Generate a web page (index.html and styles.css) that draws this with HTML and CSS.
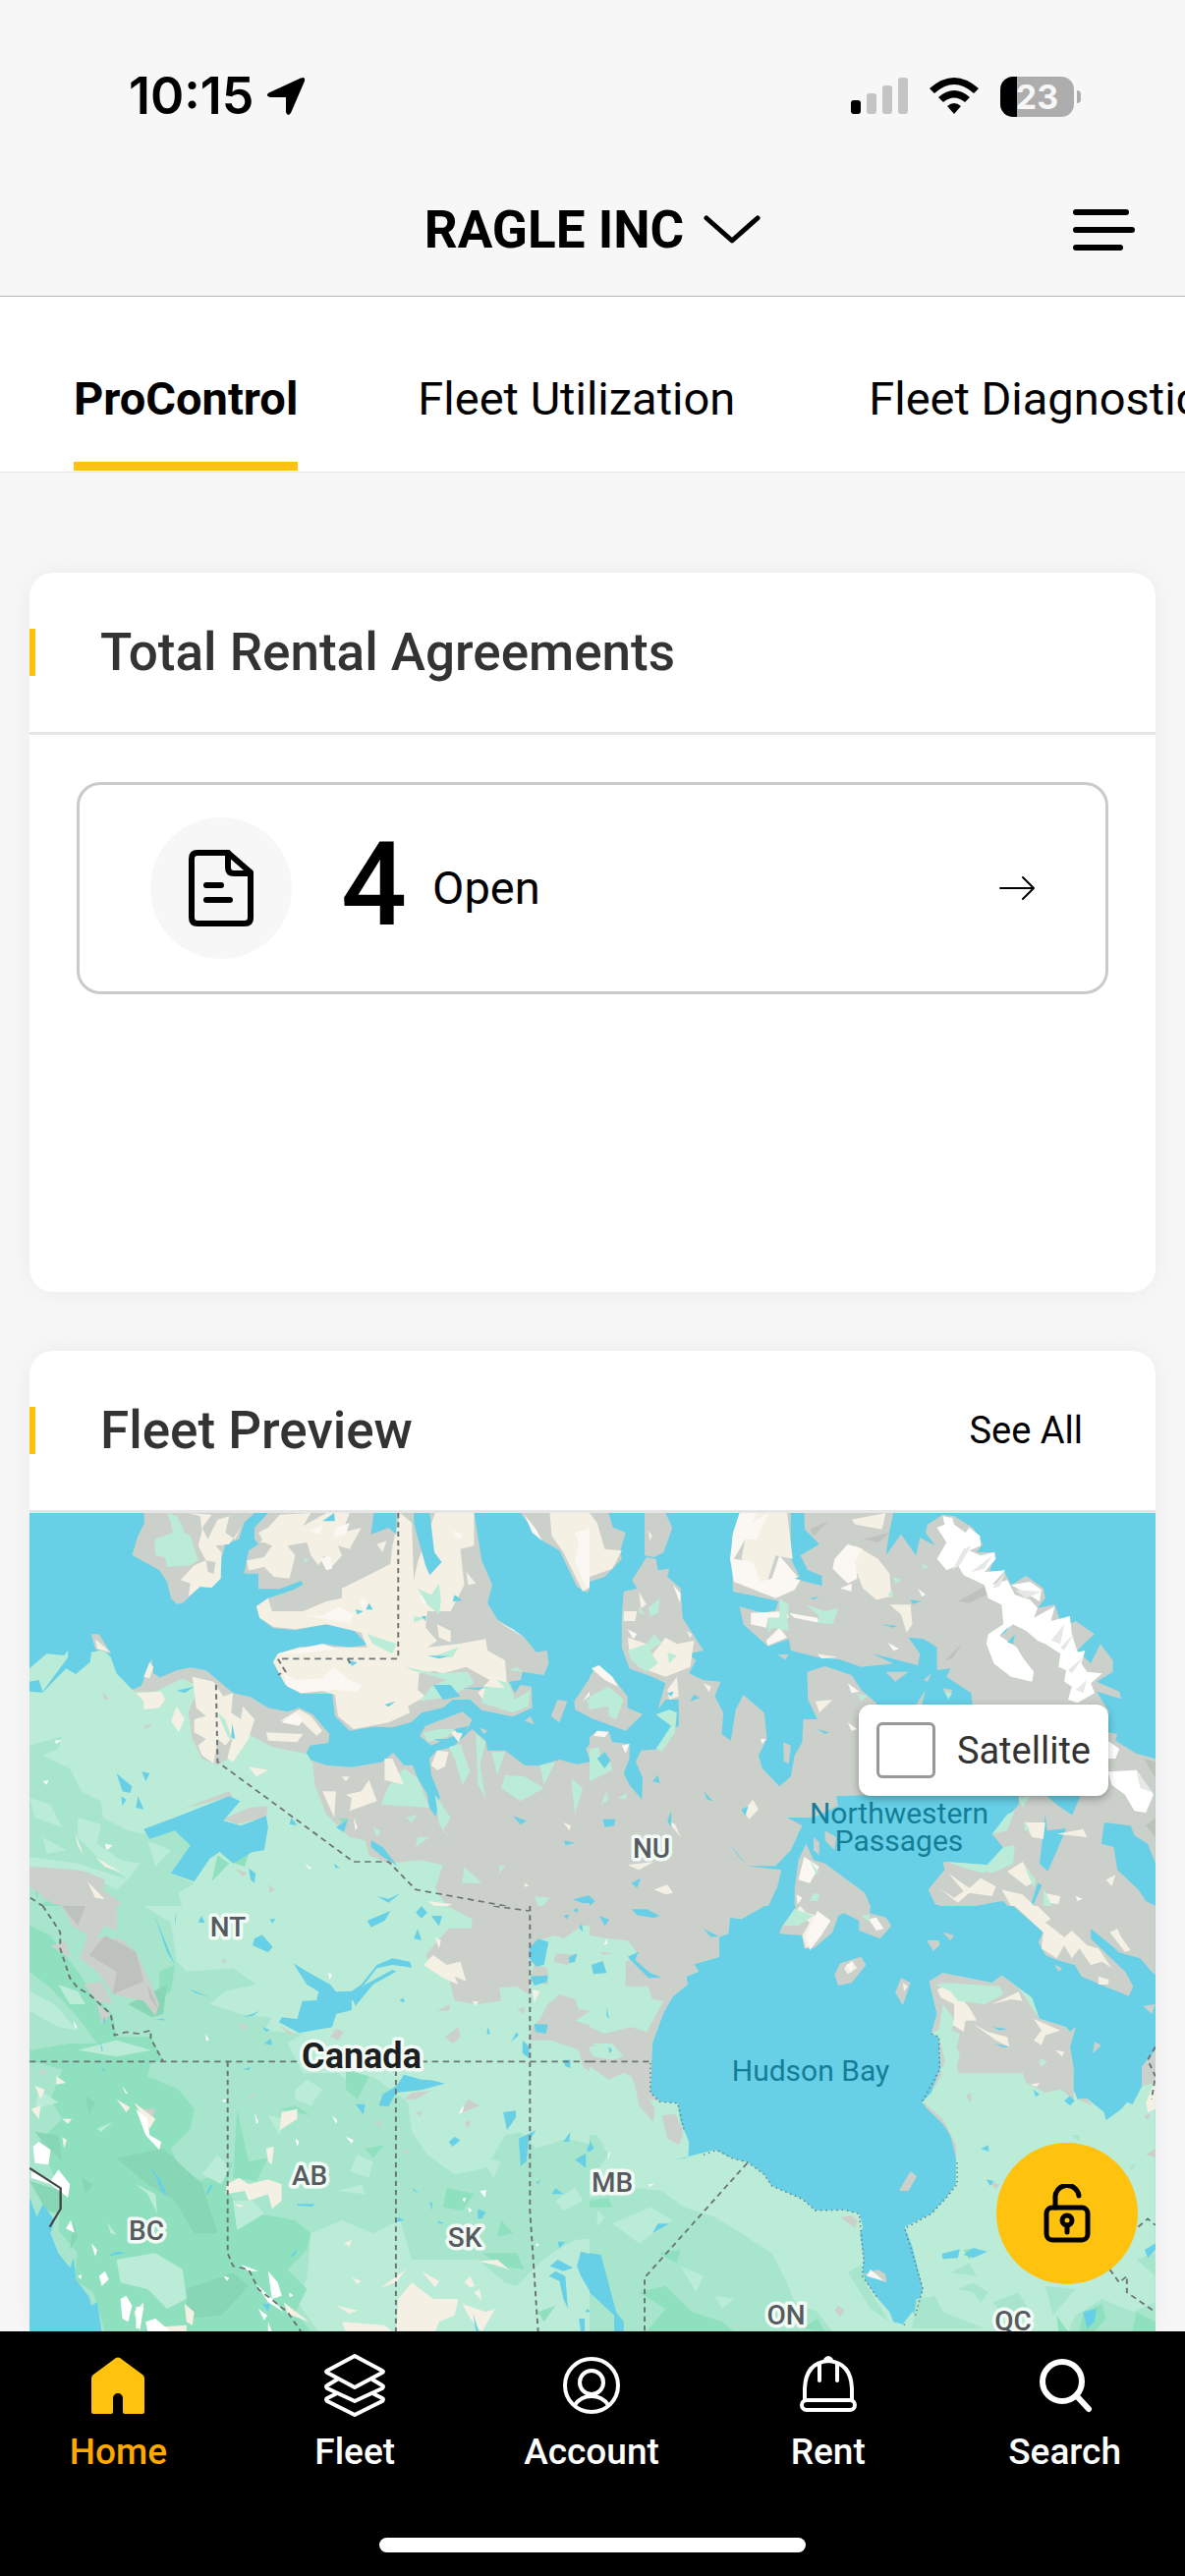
FILE: index.html
```html
<!DOCTYPE html>
<html lang="en">
<head>
<meta charset="utf-8">
<meta name="viewport" content="width=device-width, initial-scale=1">
<title>ProControl</title>
<link rel="stylesheet" href="styles.css">
</head>
<body>
<header class="top">
  <div class="status">
    <div class="status-left">
      <span class="clock">10:15</span>
      <svg width="40" height="40" viewBox="0 0 40 40" aria-hidden="true"><path d="M35 1.500Q40 -.5 39 4.500L25 37Q21.500 41.500 20 36V21H4Q-1.500 19.500 2.500 16.500Z"/></svg>
    </div>
    <div class="status-right">
      <svg width="58" height="38" viewBox="0 0 58 38" aria-hidden="true"><rect y="23" width="10" height="14" rx="3"/><g fill="#c4c4c4"><rect x="16" y="16" width="10" height="21" rx="3"/><rect x="32" y="8" width="10" height="29" rx="3"/><rect x="48" width="10" height="37" rx="3"/></g></svg>
      <svg width="50" height="38" viewBox="0 0 50 38" aria-hidden="true"><path d="M0 11Q25-11 50 11L45 16Q25-2 5 16Z"/><path d="M9 20Q25 6 41 20L36 25Q25 16 14 25Z"/><path d="M18 29Q25 23 32 29L25 37Z"/></svg>
      <div class="battery"><span class="battery-cell">23</span><span class="battery-tip"></span></div>
    </div>
  </div>
  <div class="titlebar">
    <button class="company" type="button">RAGLE INC
      <svg width="58" height="30" viewBox="0 0 58 30" aria-hidden="true"><path class="line5" d="M3 3L29 26L55 3"/></svg>
    </button>
    <button class="menu" type="button" aria-label="Menu">
      <svg width="63" height="42" viewBox="0 0 63 42" aria-hidden="true"><path class="line6" d="M3 3H54M3 21H60M3 39H48"/></svg>
    </button>
  </div>
</header>

<nav class="tabs" aria-label="Sections">
  <a class="tab tab-active" href="#procontrol">ProControl</a>
  <a class="tab" href="#utilization">Fleet Utilization</a>
  <a class="tab" href="#diagnostics">Fleet Diagnostics</a>
</nav>

<main class="content">
  <section class="card agreements">
    <div class="card-head"><h2>Total Rental Agreements</h2></div>
    <div class="card-body">
      <a class="summary" href="#agreements">
        <span class="disc"><svg width="66" height="78" viewBox="0 0 66 78" aria-hidden="true"><path class="line6" d="M40 3H9Q3 3 3 9V69Q3 75 9 75H57Q63 75 63 69V23Z"/><path class="line6" d="M40 3V18Q40 24 46 24H63M18 36H33M18 51H42"/></svg></span>
        <span class="count">4</span>
        <span class="state">Open</span>
        <svg class="go" width="36" height="24" viewBox="0 0 36 24" aria-hidden="true"><path class="line2" d="M1 12H34M24 1L35 12L24 23"/></svg>
      </a>
    </div>
  </section>

  <section class="card fleet">
    <div class="card-head"><h2>Fleet Preview</h2><a class="see-all" href="#fleet">See All</a></div>
    <div class="map">
      <svg class="map-art" viewBox="30 1540 1146 833" preserveAspectRatio="xMidYMin slice" role="img" aria-label="Map of Canada">
        <rect class="w" x="30" y="1540" width="1146" height="833"/>
        <svg x="0" y="1530" width="620" height="430" viewBox="0 0 1568 1290" preserveAspectRatio="none">
          <path class="g" d="M340 570L455 510L490 502L530 510L600 580L645 592L690 625L740 637L770 625L805 645L848 705L845 732L798 740L783 778L840 800L905 806L985 790L1012 762L1040 800H1062L1075 840L1100 890L1105 930L1122 958L1132 895L1110 830L1105 780L1125 755L1165 745L1215 690L1250 725L1255 755H1300L1350 800L1385 802L1440 783L1485 797L1520 790L1508 750L1535 710L1568 700V1290H76V800Z"/>
          <path class="l" d="M76 575L110 578L170 505L195 522L232 485L235 455L265 448L285 470L300 520L345 575H400L470 535L510 560L485 640L495 720L520 780L560 800L600 770L640 705L700 745L790 765L805 795L810 860L840 950L900 1020L940 1030L950 1075L1000 1100L1080 1090L1140 1105L1120 1175L1150 1230L1215 1290H76ZM76 505L120 460L165 465L175 450V470L110 575L100 540L76 545Z"/>
          <path class="l" d="M1040 810L1075 840L1105 930L980 920L1000 865ZM1155 745L1185 735L1210 820L1190 860L1170 780ZM1225 705L1250 730L1235 800L1250 900L1230 860ZM1265 760L1300 760L1280 830ZM1300 830L1350 835L1400 870L1340 910L1290 870ZM1390 800L1430 790L1400 860ZM1470 840L1500 870L1480 950ZM1120 890L1160 960L1140 1000L1175 1050L1130 980ZM1540 750L1568 760V860L1530 810ZM1045 960L1075 950L1060 975ZM1075 1020L1105 1020L1070 1050ZM1195 1110L1240 1160L1190 1160ZM1375 1200L1415 1205L1390 1240ZM960 990L980 1000L970 1020ZM1285 1105L1300 1110L1285 1130Z"/>
          <path class="m" d="M76 740L160 712L150 750L110 770L180 810L210 880L260 910L265 960L330 1000L370 1010L450 1000L500 1040L470 1090L440 1130L500 1160L460 1190L480 1290H76V1110L200 1120L300 1180L330 1150L200 1100L76 1080Z"/>
          <path class="l" d="M76 900L130 920L160 990L90 960ZM200 960L260 980L250 1040L310 1090L360 1100L330 1150L250 1080L200 1020ZM380 1030L440 1060L400 1110ZM110 1020L170 1060L120 1070Z"/>
          <path class="d" d="M450 1000L520 995L530 1015L500 1035ZM560 1075L590 1100L545 1155ZM600 1060L640 1070L630 1110L605 1100ZM870 962H895L890 990ZM80 1130L110 1160L95 1210ZM150 1200L200 1220L180 1260L120 1290H76V1240Z"/>
          <path class="g" d="M76 1110L150 1115L220 1125L270 1150L265 1180L310 1220L300 1250L250 1290H170L190 1240L130 1220L76 1170ZM370 30L372 60L355 100L340 158L410 205L430 240L440 290L455 308L470 305L515 255L540 258L568 230L570 170L580 125L615 110L628 60L655 30ZM690 30L655 75V110L665 125L640 145L628 215H665V262H720L775 237L780 248L755 265L690 290L660 315L668 350L703 382L760 388L840 370L910 388L945 432L900 440L835 430L770 440L715 460L703 485L735 555L775 582H855L862 650L900 695L960 683L1010 685L1060 668L1085 640L1140 625L1165 600H1210L1240 632L1320 652L1370 625L1368 560L1340 555L1325 580L1310 545L1340 540L1345 515L1400 525L1412 490L1408 450L1380 455L1350 410L1280 355L1255 305L1267 250L1240 175L1220 30ZM1340 30L1390 110L1440 145L1485 255L1510 273L1568 200V30ZM235 400L255 400L285 460L245 445ZM390 475L395 520L410 530L390 575L360 570ZM1080 710L1095 680L1190 637L1215 660L1200 700L1160 715L1110 740ZM1435 600L1460 605L1440 670L1418 650ZM1478 605L1540 495L1568 530V685L1480 630ZM1350 665L1365 650L1375 675ZM1235 685L1255 695L1245 705ZM455 940L590 880L600 895L480 930ZM575 965L640 930L690 925L685 960L610 980ZM370 680L395 672L375 690ZM265 575L280 600L268 600ZM605 1115L635 1130L625 1140ZM690 1165L708 1180L695 1190Z"/>
          <path class="c" d="M485 30L515 40L520 85L510 130L530 175L500 190L465 235L490 245L485 285L515 255L545 258L568 230L570 150L555 130L590 125L620 75L605 110L580 90L590 40L560 50L535 110L520 75L545 35ZM530 175L555 180L550 215L535 210ZM690 75L720 35L800 30L780 70L840 30H900L880 90L930 75L900 140L870 130L880 160L850 200L835 160L820 190L800 160L790 120L740 130L760 160L745 230L705 225L680 195L640 205L635 175L680 165L700 130L680 120L665 90ZM660 315L690 290L700 330L780 330L840 300L880 290L880 260L940 225L1005 185L1010 130L1030 30L1060 60L1065 235L1075 180L1120 30H1220V130L1185 140L1195 250L1160 330L1100 330L1095 380L1125 420L1100 440L1180 430L1250 415L1255 450L1300 480L1305 560L1315 600L1250 610L1230 580L1260 540L1200 500L1140 520L1080 500L1075 570L1095 590L1050 620L1055 640L1000 670L910 690L870 650L862 585L820 570L775 580L735 555L703 485L715 460L770 440L860 440H945L930 395L840 370L760 385L705 378L668 350ZM1415 30L1420 100L1450 150L1500 270L1568 220V30ZM245 415L285 455L250 445ZM385 485L395 500L385 535L370 530ZM350 580L415 575L425 600L410 625L370 630L370 605ZM495 530L550 545L575 590L600 580L595 640L620 660L625 620L655 660L640 720L600 790L585 780L600 710L580 740L560 720L550 795L520 770L510 740L530 720L500 700L500 660L530 650L505 625ZM455 620L475 660L460 700L440 665ZM720 665L770 630L800 650L830 695L815 710L770 660ZM685 700L780 705L765 730L690 725ZM1110 800L1125 755L1155 760L1145 805L1125 815ZM830 880L865 880L860 960ZM950 845L970 910L900 940L905 900L890 890L930 880ZM990 780L1010 780L1040 860L990 845ZM640 805L690 815L660 835ZM880 835L900 835L890 850ZM193 1005L215 1075L200 1045ZM245 1080L315 1130L270 1110ZM225 1155L270 1210L245 1205ZM1450 975L1470 985L1465 1000ZM1350 1160L1362 1168L1350 1172Z"/>
          <path class="c" d="M670 120H715L740 100L745 80L700 60ZM970 125L995 115L985 150ZM1200 210L1225 245L1205 250ZM1125 370L1160 390L1160 425L1130 410ZM1050 470L1200 460L1180 500L1080 520ZM1160 700L1200 680L1180 730ZM1100 1215L1165 1225L1130 1240Z"/>
          <path class="s" d="M780 340L830 345L870 315L910 340L900 365L840 355ZM730 520L760 540L830 535L860 500L900 540L930 555L920 575L860 570L775 580L740 560ZM715 460L830 430L870 445L770 460ZM1480 90L1568 60V210L1510 260L1480 180L1490 120ZM1350 35L1380 80L1395 115L1370 90ZM1535 500L1568 540L1500 605L1520 570ZM825 170L850 160L855 200L840 205ZM795 85L830 65L825 95ZM865 75L900 60L890 95L860 105ZM1165 85L1190 95L1180 110ZM925 290L945 300L935 330ZM1080 280L1105 295L1090 310ZM1280 360L1320 385L1350 410ZM760 640L780 660L770 680L725 670ZM785 1100L802 1115L795 1118ZM110 850L125 845L120 860ZM140 725L160 722L145 735ZM270 1040L290 1045L275 1060ZM910 960L920 990L915 1000Z"/>
          <path class="l" d="M430 30L455 40L465 60L475 90L490 100L510 175L490 190L430 195L425 165L400 160L398 110L445 90L440 60ZM1075 260L1110 280L1130 245L1135 300L1130 340L1100 310ZM1065 345L1095 350L1065 365ZM945 400L1020 430L1010 460L960 430ZM1110 470L1180 440L1165 470ZM1045 500L1120 520L1205 515L1220 550L1160 590L1080 605L1110 560L1150 540L1060 510ZM1250 560L1300 565L1280 540L1310 550L1325 600L1365 570L1360 620L1320 640L1240 610ZM1090 700L1130 690L1170 690L1150 715L1100 730ZM1510 600L1568 590V680L1520 640ZM785 165L795 175L780 180ZM1330 500L1345 515L1310 510ZM560 640L580 660L600 730L585 710Z"/>
          <path class="w" d="M955 95L962 30H1020V95L1000 75ZM1065 30H1106L1118 150L1137 180L1106 220L1095 190L1065 60ZM830 55L860 30L862 55ZM1165 300L1170 280L1190 297ZM1085 345L1097 345L1095 360ZM950 305L960 325L942 325ZM915 325L935 330L920 340ZM1100 465L1155 467L1130 475ZM1190 565L1255 562L1230 570ZM990 615L1018 605L1000 622ZM455 572L500 560L475 580ZM598 672L605 720L595 715ZM1115 555L1160 555L1185 590L1140 600ZM900 480L920 487L905 498ZM1170 690L1205 680L1198 705L1175 700ZM1115 720H1160L1150 735ZM370 995L450 960L590 895L618 910L575 970L620 985L685 955L690 990L680 1060L650 1065L600 1100L565 1065L540 1085L500 1155L440 1130L490 1045L450 1000L385 1025ZM300 825L340 865L335 885L315 880ZM312 895L325 905L315 925ZM355 895L370 935L350 930ZM365 820L385 825L375 850ZM750 960L765 985L745 980ZM640 1115L658 1130L655 1160L645 1150ZM865 990L895 965L885 1005ZM955 1030L985 1050L1022 1107L985 1080L955 1050ZM1320 955L1355 970L1340 982ZM1452 1030L1480 1037L1455 1045ZM970 1200L1000 1208L1030 1192L1000 1220ZM950 1265L1005 1245L985 1290H945ZM1065 1260L1080 1230L1100 1260L1085 1270ZM1110 1260L1138 1262L1130 1290ZM1475 1210L1515 1198L1530 1220L1500 1222ZM1478 1240L1488 1245L1475 1255ZM860 1100L875 1115L862 1112ZM505 1290L518 1260L528 1290ZM445 1290L455 1255V1290ZM695 1270H710L700 1283ZM1545 1260L1568 1290H1550Z"/>
          <path class="b" d="M1025 30V475H715L735 515L715 524M895 475L905 500M556 555L560 790L910 1095H1000L1070 1180L1362 1243V1290M78 1205L110 1230L120 1270L150 1290"/>
        </svg>
        <svg x="600" y="1530" width="606" height="430" viewBox="0 0 1568 1290" preserveAspectRatio="none">
          <rect class="w" width="1568" height="1290"/>
          <path class="g" d="M0 30H50L62 75L85 85L95 90L80 150L85 170L40 225L0 240ZM145 30H200L218 75L195 150L170 165L145 160ZM150 165L175 170L180 205L210 200L205 225L240 260L245 350L300 450L260 460L280 480L262 520L300 540L345 545L330 590L352 640L348 705L372 725L385 630L405 585L460 640L467 720L445 770L455 810L500 865L530 835L540 770L560 730L563 660H600L575 600L573 515L620 498L690 525L715 570L755 610V890L650 895L655 925L590 960H520L560 985L550 1010L530 1060L490 1108H415L370 1040L390 1075L415 1108L505 1120L495 1170L465 1245L400 1265L370 1270L365 1290H0V715L20 695H50L60 730L105 735V780L90 825L105 860L138 905L140 840L122 790L135 755L190 750L215 690L235 680V600L200 600L180 630L200 550L165 530L105 505L85 440V350L90 270L125 260L112 235ZM0 530L20 495L60 530L100 590V625L140 645L95 695L0 655Z"/>
          <path class="g" d="M565 30L567 80L605 125L555 160L575 205L612 222V252L540 230L500 290L490 328L455 335L395 315L405 370L470 437L525 415L530 450L600 470L660 478L715 500L800 490L745 460L865 495L870 460L840 410L880 415L915 440V510L950 505L940 530L1005 580L1010 640H1370L1335 575L1400 598L1395 575L1335 545L1378 515V480L1345 430L1320 490L1285 450L1305 425L1330 400L1280 360L1245 380L1225 310L1180 320L1200 290L1195 260L1150 222L1110 250L1090 205L1050 220L1070 150H1020L1035 125L1010 75L960 40L930 35L890 65L885 90L910 130L870 105L860 160L820 95L780 160L790 85L800 30ZM375 170L378 270L440 285L500 300L560 240L530 170V30H395L375 100ZM495 462H525L515 478ZM780 515L840 515L805 545ZM880 540L900 520L890 545ZM860 615L885 570L875 615ZM510 730L530 740L525 795L512 790ZM930 565L955 570L945 600ZM1365 700L1390 705L1385 725L1440 765L1490 780V1100L1470 1040L1435 1015L1425 985L1355 975L1348 1040L1380 1050L1390 1120L1445 1180L1465 1215L1490 1230V1290H1145L1090 1215L1060 1220L960 1243L910 1225L892 1180L935 1120L930 1095L1050 1105L1090 1085L1095 1060L1060 1010L1130 920V895H1205L1230 920L1280 960V990L1205 1000L1200 950L1185 1100L1225 1145L1240 1190L1180 1160L1145 1290ZM570 1040L550 1090L540 1180V1240L505 1290H790L775 1265L735 1255L745 1245L725 1190L620 1100L590 1090ZM620 1000L650 1020L645 1060L620 1030ZM590 1020L605 1035V1075L590 1060Z"/>
          <path class="c" d="M0 30L20 60L40 140L85 145L60 200L0 225ZM440 30H520L535 170L490 160L460 270L430 200L400 170L410 110ZM700 130L760 170L790 215L795 285L755 295L720 260L700 200ZM690 50L780 30L770 80L700 65ZM90 330L125 330L120 360L90 360ZM130 270L150 310L135 320ZM100 410L150 430L160 470L200 410L230 430L275 420L265 500L200 530L130 500L105 450ZM790 310L845 310L850 370L835 395L820 340ZM600 460L655 470L610 475ZM300 550L320 560L315 578ZM205 570L230 530L235 590L210 600ZM595 605L640 600L605 640ZM405 940L430 905L445 935L420 965ZM205 970L225 980L240 1020ZM170 1180L205 1165L220 1190L200 1195ZM1145 975L1200 975L1195 1025L1165 1020ZM1230 1010L1300 995L1310 1020ZM920 1175L960 1205L985 1185L945 1130L1000 1175L1030 1145L1070 1170L1060 1200L1000 1190L970 1220ZM1100 1125L1140 1095L1175 1155L1150 1170ZM1085 1180L1140 1195L1190 1250L1220 1290H1150L1110 1230ZM1360 1150L1385 1135L1375 1170ZM1195 1190L1240 1200L1235 1225L1205 1220ZM100 1105L170 1095L130 1120ZM155 85L165 100L158 115ZM255 390L270 400L265 412Z"/>
          <path class="s" d="M395 30H440L430 60L470 30L440 110L410 110L380 170L430 180L450 240L480 230L500 160L555 235L540 265L490 290L380 240L370 170L378 90ZM645 170L680 125L720 140L700 175L705 230L680 245L640 200ZM425 335L520 330L525 350L470 350L465 380L425 370ZM465 420L500 380L520 410L470 435ZM220 250L240 275L238 305ZM5 505L25 495L60 530L75 560L40 540ZM660 260L690 245V270ZM565 1080L605 1110L580 1160L550 1150ZM585 1250L635 1255L640 1290H580ZM735 1270L775 1275L780 1290H740ZM525 335L600 350L605 365L540 350ZM545 1195L560 1205L548 1225ZM680 550L710 575L690 580ZM1280 1200L1298 1208L1285 1215ZM1437 1240L1452 1255H1440ZM865 260L885 280L875 285ZM100 385L125 400L115 415ZM20 695L50 700L40 715L10 710ZM450 720L465 720L455 735ZM85 740L105 735L95 765ZM680 670L705 690L690 695ZM785 425L815 445L800 450Z"/>
          <path class="i" d="M930 40L955 45L960 65L990 90L1000 75L1028 100L1030 130L1000 145L1030 160L1065 150L1070 170L1040 210L1095 205L1060 250L1100 235L1120 280L1160 295L1180 320L1170 350L1225 315L1215 360L1265 345L1270 400L1285 455L1305 450L1295 490L1310 515L1350 520L1320 550L1330 580L1285 610L1260 600L1270 560L1250 545L1255 510L1235 500L1240 460L1200 430L1180 420L1150 390L1115 370L1080 405L1125 440L1140 470L1170 515L1165 545L1110 530L1065 490L1045 430L1050 400L1090 370L1085 310L1050 290L1040 250L985 220L970 190L940 205L915 170L940 120L915 75L935 65ZM1110 250L1160 240L1190 265L1185 300L1150 275ZM1365 725L1395 750L1385 780H1365ZM1365 820L1440 815L1485 890L1465 945L1435 940L1410 890L1375 860Z"/>
          <path class="h" d="M955 205L985 140L1005 130L975 190ZM1005 210L1060 160L1040 200ZM1060 260L1095 210L1080 255ZM1120 265L1190 270L1150 290ZM1215 420L1250 370L1240 430ZM1240 440L1275 400L1250 450ZM1260 510L1300 470L1270 520ZM1280 570L1310 540L1300 580ZM1440 820L1485 885L1450 870Z"/>
          <path class="e" d="M970 300L1000 280L1040 255L1045 280L1000 305ZM935 480L980 430L955 475ZM720 110L790 90L760 120ZM580 80L630 55L590 100ZM1460 780L1490 790V840ZM1465 985L1490 960V1020Z"/>
          <path class="l" d="M155 320L185 290L180 335L160 345ZM130 315L145 340L130 335ZM100 450L150 430L170 400L190 425L160 450L180 490L150 515L110 480ZM205 455L230 465L210 490ZM470 350L500 350L500 290L525 310L520 350L525 390L480 380L470 400ZM570 310L620 330L655 320L640 370L600 365L605 345ZM0 590L50 560L90 600L70 660L50 650L50 620L0 630ZM175 645L210 630L230 640L225 700L190 760L175 750L215 680L185 655ZM0 750L25 745L30 800L55 790L60 815L0 850ZM30 920L45 880L50 905ZM75 900L100 885L95 905ZM1060 1010L1100 950L1120 940L1100 1000ZM1130 900L1160 895L1140 930ZM1145 970L1160 1000L1145 1000ZM1090 1050L1120 1045L1115 1100L1060 1130L1035 1120ZM940 1095L1050 1105L1040 1130L990 1115ZM1145 1110L1175 1150L1170 1175ZM1195 1175L1220 1235L1195 1235ZM580 1090L605 1130L595 1130ZM590 1190L605 1195L600 1215L580 1215ZM505 1290L540 1245L580 1270V1290ZM700 1285L735 1255L745 1290ZM705 580L730 590L715 605ZM800 225L820 235L805 245ZM785 280L798 265V290ZM875 185L893 195L880 200ZM935 575L955 580L945 598Z"/>
          <path class="w" d="M770 370L810 375L800 380ZM845 295L875 300L850 308ZM580 290L605 285L590 295ZM600 690L630 700L620 705ZM20 780L40 760L55 785L40 810ZM165 850L180 830L185 855ZM300 880L325 910L310 905ZM35 965L68 965L65 985L40 990ZM400 935L418 925L410 955ZM205 970L215 940L215 990ZM110 1160L135 1145L125 1175ZM110 1240L185 1255L180 1268L130 1260ZM25 1260L52 1270L40 1290ZM0 1200L15 1215L0 1230ZM265 605L275 585L290 595ZM205 580L222 575L215 590ZM550 1005L580 985L590 1010L575 1040L545 1035ZM1100 425L1120 400L1115 430ZM1080 405L1105 375L1095 395ZM540 230L612 252L575 215Z"/>
        </svg>
        <svg x="0" y="1940" width="620" height="440" viewBox="0 0 1568 1320" preserveAspectRatio="none">
          <rect class="l" width="1568" height="1320"/>
          <path class="m" d="M76 0H370L440 50L455 170L480 200L600 190L660 240L580 260L540 300L620 330L700 340L680 380L780 390L740 420L780 510L870 510L900 540L960 520L1050 600L1060 690L1100 760L1170 820L1250 800L1300 700L1340 690L1380 740L1460 710L1568 740V1010L1480 1020L1420 1060L1380 1100L1330 1160L1300 1150L1230 1080L1060 1080L1030 960L960 1000L880 960L800 1000L790 1140L760 1200L820 1300H76Z"/>
          <path class="d" d="M76 60L130 90L200 200L240 270L290 330L300 400L390 400L420 475H390L380 520L460 560L500 620L490 680L440 740L460 800L520 840L600 780L580 860L620 930L760 960L800 1000L790 1050L740 1110L790 1170L760 1240L800 1300H270L240 1180L190 1140L200 1060L150 990L160 880L100 720L160 650L130 590L160 500L76 470V440L180 420L250 420L200 340L130 250L76 200ZM410 200L450 180L440 260L410 280ZM610 620L640 780L690 770L660 840L600 830ZM720 620L760 610L800 640ZM890 500L950 520L920 590L890 560ZM940 740L990 730L960 770ZM1150 860L1220 880L1190 930L1140 920ZM1290 960L1320 1000L1280 1010ZM1240 1060L1330 1060L1350 1110L1290 1100ZM1385 1240L1430 1220L1400 1270Z"/>
          <path class="e2" d="M300 770L420 740L520 850L560 1000L500 1000L450 900L380 850ZM210 830L240 850L220 880ZM76 840L160 870L150 940L120 930ZM330 300L430 240L420 330L390 340ZM480 1170L600 1120L640 1160L570 1250L480 1260ZM190 960L200 1010L180 1050ZM220 580L245 600L230 640ZM90 690L150 700L160 780L110 720Z"/>
          <path class="l" d="M76 260L140 300L200 380L150 370L76 320ZM300 1080L400 1060L470 1110L480 1200L430 1230L380 1170L310 1150ZM520 820L560 760L590 800L570 850ZM600 900L650 900L680 940L610 990ZM150 240L200 260L220 300L180 300ZM200 440L300 410L390 440L300 460ZM760 560L790 530L830 560L800 610L760 590ZM920 760L960 780L950 830L900 810ZM250 680L290 660L260 690ZM350 850L400 880L405 940L380 880ZM275 965L300 1005L285 1000ZM1240 770L1290 780L1270 830ZM1430 900L1480 860L1500 900L1450 930ZM870 870L930 850L940 880ZM690 640L730 650L720 700ZM100 560L150 600L90 620Z"/>
          <path class="g" d="M1150 0L1215 40V68H1155L1095 150L1110 180L1150 190L1170 290L1230 300L1290 290L1285 250L1330 245L1362 272V130L1400 100L1430 90L1450 100L1500 60L1568 62V0ZM1430 145L1490 150L1460 180L1425 170ZM1375 180L1410 190V240L1365 230ZM1410 300L1440 270L1480 285L1490 315L1520 320L1480 350L1530 370L1568 380V490L1540 525L1500 490L1490 440L1420 410H1362L1370 370L1390 345ZM1125 320L1160 300L1155 320ZM1145 400L1180 370L1185 400L1165 420ZM1330 315L1350 310V330ZM1180 635L1205 590L1235 610ZM1040 590L1060 570L1110 565L1070 590ZM1195 660L1212 655L1205 678ZM965 660L978 655V680ZM1070 630L1088 628L1080 642ZM850 400L865 375L885 385L870 410ZM610 355L640 370L630 380ZM720 365L755 390L745 395ZM640 590L650 570L655 580ZM570 165L580 160V180ZM160 0H300V75L270 60L250 95L310 100L350 140L385 230L410 300L400 335L370 290L290 270L250 200L205 160L225 90L185 60ZM130 120L170 110L180 160ZM215 240L260 230L290 300L250 290ZM250 300L285 330L262 360ZM1030 740L1055 750L1045 758ZM100 500L120 505L110 520ZM365 620L400 620L390 660Z"/>
          <path class="e" d="M270 90L350 140L370 230L330 250L290 270L300 200L230 150ZM160 0H220L200 60ZM300 100L350 230L300 180ZM380 240L410 320L385 280Z"/>
          <path class="c" d="M1090 180L1115 150L1150 180L1185 170L1200 230L1170 215L1180 240L1140 220ZM1370 255L1390 260L1375 295ZM1120 95L1135 105L1130 130ZM1215 290L1232 292L1225 305ZM585 850L615 830L640 850L690 835L725 850V900L700 925L690 880L640 900L630 870L580 880ZM725 630L765 620V650L720 685ZM1025 1200L1060 1150L1115 1200H1180L1170 1250L1130 1270L1120 1300H1020ZM980 1165L1045 1110L1020 1150ZM1085 1115L1130 1145L1120 1165ZM1195 1150L1210 1130L1222 1160L1210 1165ZM1220 1180L1235 1170L1240 1205ZM1230 1085L1280 1080L1310 1110L1270 1095ZM1190 1215L1250 1240L1275 1230L1240 1300L1210 1260ZM865 1220L920 1235L900 1245ZM880 1270L990 1280L1010 1300H890ZM905 1135L930 1145L920 1155ZM885 1030L905 1020L900 1040ZM685 740L705 735L700 790L690 780ZM90 550L115 560L105 590ZM145 520L170 540L145 545ZM160 650L185 650L175 665ZM160 705L172 715L165 740ZM345 600L400 650L385 680ZM300 590L335 615L325 630ZM475 1215L500 1240L495 1280L480 1270ZM730 1210L795 1270L740 1245ZM345 1240L370 1210L360 1300ZM605 910L630 915L615 920ZM420 1285L480 1280V1300H430ZM80 620L105 610L100 650Z"/>
          <path class="i" d="M85 735L100 720L130 745L125 790L90 785ZM80 810L130 840L150 805L180 850L175 890L130 850L80 830ZM350 620L380 650L385 700L415 720L410 745L375 700ZM255 1130L270 1115L280 1140L262 1160ZM235 1030L250 1050L245 1070ZM170 985L182 960L192 998ZM310 1200L325 1190L340 1220L330 1270L315 1260ZM375 1270L400 1260L440 1300H380ZM690 1115L715 1150L725 1190L700 1200ZM660 1155L700 1200L730 1240L690 1210ZM620 1095L665 1115L640 1115ZM665 1230L688 1250L680 1265ZM690 1270L700 1300H690ZM575 1130L590 1135L585 1145ZM890 705L910 715L905 725ZM760 710L770 720L765 735ZM1235 870L1252 868L1248 890ZM655 630L665 660L660 665ZM570 595L582 590L580 600ZM1180 635L1195 605L1190 630ZM855 640L868 655L865 665ZM315 550L330 575L322 570ZM200 1130L210 1125L208 1140ZM350 1225H370L360 1290H350ZM190 350L200 375L192 370ZM845 205L855 210L848 225ZM530 390L538 410L530 410ZM745 1180L755 1190L745 1195ZM1380 1030L1388 1035L1380 1040ZM1205 920L1215 930L1207 935ZM1190 895L1200 890L1195 905Z"/>
          <path class="w" d="M76 890L95 950L110 910L140 960L130 1000L150 1060L180 1105L190 1075L195 1140L230 1195L235 1220L250 1210L262 1300H76ZM755 175L790 200L850 240L865 262L905 260L930 240L970 180L1010 160L1055 170L1060 188L1010 180L970 190L905 290V318L865 330L855 370L770 388L718 355L725 340L765 345L778 290L815 288L820 262L790 240ZM905 280L940 240L1010 195L1020 200L960 240L915 305ZM655 100L675 88L702 125L690 142L650 120ZM975 610L985 575L1020 550L1040 515L1085 530L1110 532L1145 542L1085 562L1020 570L1000 612ZM915 605H940L935 637ZM1295 630L1328 625V645L1305 685ZM1335 710L1380 685L1360 720L1355 780L1340 795ZM1155 720L1170 705L1185 715L1165 735ZM1362 130L1385 100L1412 110L1400 180L1380 185L1362 160ZM1365 215L1410 212L1408 232L1375 243ZM1520 170L1545 165L1560 210L1530 205ZM1465 155L1485 145L1480 170L1465 175ZM1375 360L1410 362L1405 390L1378 385ZM1345 410L1362 430V465L1345 450ZM1315 415L1330 385L1335 395ZM1255 370L1262 390L1253 392ZM1450 470H1468V495L1455 490ZM945 45L1005 15L990 45L955 65ZM1070 20L1085 0L1100 20L1085 38ZM1110 30H1138L1130 62ZM1065 100L1075 70L1085 105ZM450 40V60L455 20ZM510 50L518 30L528 52ZM695 40H710L700 53ZM1475 15L1485 5L1488 20ZM1450 30L1465 25L1460 40ZM1545 25L1568 50V65L1545 50ZM1490 65L1498 55L1500 80ZM675 370L695 378L685 385ZM680 420L697 405L700 425ZM625 340L670 320L650 335ZM1028 290L1038 280L1042 295ZM395 20L450 180L430 140ZM490 255L540 278L500 265ZM400 345L425 345L420 350ZM380 790L410 830L430 885L415 870L400 825ZM530 880L540 855L550 850L535 880ZM765 910H810L805 918L765 915ZM625 498L645 492L640 502ZM1480 775L1508 755V800ZM1510 745L1520 720L1530 735L1520 755ZM1450 720L1468 690L1465 720ZM1420 880L1430 862L1450 880ZM1380 845L1392 835L1385 850ZM1230 955V925L1250 935L1240 955ZM1020 965L1025 950L1040 960ZM1125 960L1130 970L1145 970ZM1105 905L1112 905V930ZM1060 860L1080 880L1065 870ZM1435 1025L1455 1025L1440 1045ZM1485 1100L1495 1055L1545 1070L1568 1130V1200L1540 1220L1495 1130ZM1415 1100L1435 1080L1475 1105L1450 1115ZM1412 1130L1430 1115L1455 1130L1462 1230L1450 1200L1440 1145ZM1505 1240L1512 1230L1520 1240ZM1490 1260H1505V1300H1495ZM1218 1245L1232 1300H1225ZM745 1075L765 1045L760 1065ZM275 1070L300 1055L325 1060ZM262 490L270 505H265ZM675 1215L695 1215L690 1240ZM257 410L265 440L262 445ZM268 335L272 360L265 355Z"/>
          <path class="b" d="M76 475H1568M586 475V1060L600 1100L640 1110L665 1170L740 1240L775 1300M1019 475V1300M1364 0V930L1385 1300M110 0L155 80V130L180 220L200 250L230 270L285 330L295 395L325 385L355 390L388 380V405L420 475M1270 0L1362 15"/>
          <path class="bs" d="M76 800L156 862V925L128 980"/>
        </svg>
        <svg x="600" y="1940" width="606" height="440" viewBox="0 0 1568 1320" preserveAspectRatio="none">
          <rect class="w" width="1568" height="1320"/>
          <path class="l" d="M0 0H460L400 40L370 35L365 85L340 95L342 155L275 178L288 200L255 215L258 240L220 275L195 325L165 420L160 570L185 598L232 602L240 660L262 720L260 765L330 745L375 770L415 782L460 820L480 855L560 895L595 930L670 928L710 940L720 980L712 1000L722 1080L718 1130L760 1200L790 1240L800 1270L825 1277L850 1240L862 1250L870 1200L878 1170L865 1110L850 1040L830 980L900 940L940 890L965 850V750L950 700L925 650L875 600L900 570L925 495L920 400L900 390L915 330L895 230L930 205L1060 235L1085 212L1130 250L1165 280L1185 345L1255 370L1265 385L1280 370L1265 430L1275 500L1270 550L1285 590L1310 588L1355 630L1360 655L1400 620L1415 600L1430 605L1455 550V490L1490 440V1300H0Z"/>
          <path class="g" d="M0 0H460L400 40L370 35L365 85L340 95L342 155L275 178L288 200L255 215L258 240L220 275L195 325L165 420L160 570L185 598L130 580L110 520L90 510L50 530L0 490V440L10 460L60 470L90 460L60 420L0 430V370L40 390L110 370L150 385L195 290L165 285L155 245H95V170L130 150L100 105L50 100L0 90ZM120 550L145 560L172 620L168 660L130 610ZM190 640L225 635L245 680V700L235 730L205 710ZM505 65L545 0H740L738 22L780 35L795 60L765 100L710 75V45L670 22L655 30L640 80L590 130L565 130L560 90L500 85ZM645 210L660 175L715 155L728 180L690 235L655 243ZM820 220L845 235L825 303L805 265ZM888 105L920 105L922 120L905 138ZM930 80L960 90L950 105ZM1115 0L1195 80L1182 110L1200 150L1230 165L1278 180L1295 215L1345 240L1420 275L1432 245L1410 200L1320 100V70L1390 140L1450 160L1480 200L1490 210V0ZM1458 305L1490 300L1480 330ZM895 230L930 205L1060 235L1085 212L1130 250L1185 345L1255 370L1265 385L1280 370L1265 430L1275 500V590L1240 560L1200 570L1150 540L1140 510H970L965 440L975 390L930 370L900 390L915 330ZM1325 450L1330 415L1348 425ZM1225 180L1245 190L1235 200ZM880 600L930 650L965 730V770L950 700L930 665L885 615ZM920 400L940 490L915 540L900 570L925 495ZM815 870L845 810L862 825L840 870ZM722 1125L760 1110L780 1125L782 1150ZM660 950L690 945L705 960L700 985ZM645 1235L655 1220L672 1235L660 1255ZM990 580L1005 570V600ZM1455 490L1490 440V540L1455 550ZM1460 640L1478 635L1470 655ZM1465 760L1490 740V768ZM1050 840L1080 850L1070 865ZM1285 590L1310 588L1325 610ZM30 140L60 145L35 150Z"/>
          <path class="c" d="M540 20L555 0L570 20L630 40L610 90L570 130L560 90L580 50ZM1120 0H1180L1215 40L1200 50L1250 95L1270 75L1310 120L1340 130L1375 190L1350 170L1320 180L1290 130L1270 160L1250 120L1230 160L1190 130L1195 80ZM1370 80L1390 70L1400 95L1425 135L1410 140ZM1340 215L1368 225L1365 240H1340ZM915 255L935 245L970 270L1000 310L1020 350H990L985 385L960 365L920 375L960 345L960 300L925 280ZM1060 300L1130 262L1140 290L1110 285ZM1010 360L1050 385L1100 400L1105 430L1070 410ZM1170 345L1240 380L1200 395L1190 425L1170 410L1190 380ZM1225 440L1250 445L1245 460ZM1185 475H1205L1190 490ZM670 190L690 168L705 190L680 208ZM825 235L838 245L828 262ZM1465 600L1490 530V620L1470 630ZM212 1100L250 1105V1130L220 1125ZM1160 545L1185 540L1178 552Z"/>
          <path class="s" d="M570 90L600 15L635 45L610 90L580 135ZM735 40L755 35L775 70L755 75ZM675 180L695 170L690 205ZM45 100L48 115L38 120ZM155 850L170 848L158 858ZM45 760L55 750L50 772ZM740 1110L775 1145L730 1130Z"/>
          <path class="l" d="M510 60L540 10L590 30L550 60ZM910 240L940 235L1080 245L1090 270L1040 300L970 290L950 260ZM930 300L960 345L950 400L975 450L965 500L935 540L925 500L945 460L920 380ZM715 30L735 25L740 50ZM10 420L60 420L70 450L30 460ZM1185 465L1205 475L1190 490Z"/>
          <path class="m" d="M0 890L120 860L190 870L250 920L330 950L400 1000L480 1060L520 1150L540 1210L600 1240L640 1300H0ZM20 700L50 760L0 840V700ZM680 1120L715 1095L730 1160L790 1270L740 1230ZM950 1120L1000 1090L1020 1130ZM970 1170L1010 1150L1050 1180L1030 1210L1010 1180ZM860 1200L910 1190L930 1240L1040 1290H850ZM1060 1210L1130 1180L1160 1240L1110 1270ZM1200 1160L1280 1170L1220 1250ZM1280 1250L1350 1200L1430 1240L1490 1210V1300H1260ZM1420 800L1435 785L1430 805ZM1440 1080L1490 1060V1130ZM1270 700L1290 700V720Z"/>
          <path class="d" d="M130 1180L200 1160L270 1240L350 1270L380 1300H150L200 1230ZM0 900L50 890L60 920L0 920ZM180 1060L240 1050L230 1090ZM560 1290L600 1260L620 1300ZM1300 1240L1350 1215L1360 1260L1330 1300H1290ZM985 1050L1020 1045L1000 1080ZM1230 1250L1260 1300H1235ZM1440 1240L1490 1270V1300H1430Z"/>
          <path class="l" d="M60 970L160 920L220 960L130 1030ZM240 1100L300 1130L280 1180ZM20 930L40 950L20 980ZM330 1190L380 1200L350 1230Z"/>
          <path class="w" d="M0 1060L30 1065L70 1240L90 1270V1300H65V1250L0 1180ZM165 1000L180 970L210 970ZM928 1062L975 1048L970 1075L930 1078ZM985 1065L1010 1045L1048 1055L1010 1075ZM1030 742L1050 730L1052 750ZM1045 835L1065 840L1055 855ZM1168 560L1185 575L1175 582ZM1250 595L1265 580L1278 595L1265 610ZM1062 370L1100 375L1080 380ZM1065 420L1105 430L1090 433ZM1300 1240L1335 1230L1330 1270L1310 1290ZM1462 1050L1490 1030V1050L1470 1075ZM5 180L35 168L45 205L10 208ZM45 310L52 345L45 335ZM50 430L60 440L52 450ZM100 155L130 140L120 165L160 205L190 218L155 220ZM110 10L150 10L185 30L170 37L125 28ZM25 30L52 42L40 60ZM300 70L340 92L320 95ZM0 715L12 740L0 750ZM225 775L262 765L250 770ZM1320 70L1395 140L1345 115Z"/>
          <path class="b" d="M0 475H160M415 785L145 1135V1300M1445 980L1470 955L1490 975M1370 1110L1395 1150L1415 1130V1180L1490 1240M1490 430L1470 470L1490 520L1480 590"/>
          <path class="bt" d="M160 480V570L185 598L232 602L250 690M300 760L335 745L375 770L415 782L460 820L480 855L560 895L595 930L670 928L710 940L722 1080L718 1130L760 1200M830 1280L822 1270M858 1250L870 1200L878 1170L830 985L900 940L940 890L968 850V780M900 390L920 400L922 500L875 600"/>
        </svg>
        <g class="place">
          <text x="232" y="1971">NT</text><text x="663" y="1891">NU</text><text x="315" y="2224">AB</text><text x="149" y="2280">BC</text><text x="473" y="2287">SK</text><text x="623" y="2231">MB</text><text x="800" y="2366">ON</text><text x="1031" y="2372">QC</text>
        </g>
        <text class="country" x="368" y="2105">Canada</text>
        <g class="sea"><text x="825" y="2118">Hudson Bay</text><text x="915" y="1856">Northwestern</text><text x="915" y="1884">Passages</text></g>
      </svg>
      <label class="satellite"><input type="checkbox" name="satellite">Satellite</label>
      <button class="unlock" type="button" aria-label="Unlock">
        <svg width="48" height="60" viewBox="0 0 48 60" aria-hidden="true"><rect class="line5" x="3" y="24" width="42" height="33" rx="6"/><path class="line5" d="M12 24V15A12 12 0 0 1 36 12M24 42V49"/><circle class="line5" cx="24" cy="37" r="5"/></svg>
      </button>
    </div>
  </section>
</main>

<footer class="dock">
  <nav class="dock-nav" aria-label="Main">
    <a class="dock-item dock-active" href="#home"><svg width="64" height="66" viewBox="0 0 64 66" aria-hidden="true"><path d="M30 5Q32 4 34 5L57 22Q59 23 59 26V60Q59 62 57 62H39Q37 62 37 60V46A5 5 0 0 0 27 46V60Q27 62 25 62H7Q5 62 5 60V26Q5 23 7 22Z"/></svg>Home</a>
    <a class="dock-item" href="#fleet"><svg width="64" height="66" viewBox="0 0 64 66" aria-hidden="true"><g class="line4"><path d="M32 3L60 18Q62 19 60 20L32 35L4 20Q2 19 4 18Z"/><path d="M14 27L4 33Q2 34 4 36L32 49L60 36Q62 34 60 33L50 27"/><path d="M14 41L4 46Q2 47 4 49L32 63L60 49Q62 47 60 46L50 41"/></g></svg>Fleet</a>
    <a class="dock-item" href="#account"><svg width="64" height="66" viewBox="0 0 64 66" aria-hidden="true"><g class="line4"><circle cx="32" cy="33" r="27"/><circle cx="32" cy="30" r="12"/><path d="M15 53Q21 44 32 44T49 53"/></g></svg>Account</a>
    <a class="dock-item" href="#rent"><svg width="64" height="66" viewBox="0 0 64 66" aria-hidden="true"><g class="line4"><path d="M8 47V36Q9 10 32 8Q55 10 56 36V47M23 11V28M41 11V28M29 7Q32 3 35 7"/><rect x="5" y="48" width="54" height="10" rx="5"/></g></svg>Rent</a>
    <a class="dock-item" href="#search"><svg width="64" height="66" viewBox="0 0 64 66" aria-hidden="true"><g class="line6"><circle cx="29" cy="29" r="20"/><path d="M44 44L56 57"/></g></svg>Search</a>
  </nav>
  <div class="home-bar"></div>
</footer>
</body>
</html>
```
FILE: styles.css
```css
* { box-sizing: border-box; }

body {
  margin: 0;
  min-height: 100vh;
  display: flex;
  flex-direction: column;
  background: #f7f7f7;
  color: #000;
  font-family: Roboto, "Liberation Sans", sans-serif;
  overflow-x: hidden;
}

svg { display: block; flex: none; }
a { color: inherit; text-decoration: none; }
button { border: 0; padding: 0; background: none; color: inherit; font: inherit; }

.line2, .line4, .line5, .line6 {
  fill: none;
  stroke: currentColor;
  stroke-linecap: round;
  stroke-linejoin: round;
}
.line2 { stroke-width: 2px; }
.line4 { stroke-width: 4px; }
.line5 { stroke-width: 5px; }
.line6 { stroke-width: 6px; }

/* Status bar and title */
.top { border-bottom: 1px solid #b3b3b3; }

.status {
  height: 163px;
  padding: 72px 106px 39px 131px;
  display: flex;
  justify-content: space-between;
  align-items: center;
}
.status-left { display: flex; align-items: center; gap: 12px; }
.status-right { display: flex; align-items: center; gap: 22px; }
.clock { font: 600 52px/52px Inter, Roboto, sans-serif; }

.battery { display: flex; align-items: center; gap: 3px; }
.battery-cell {
  width: 75px;
  height: 41px;
  border-radius: 13px;
  background: linear-gradient(to right, #000 17px, #adadad 17px);
  color: #f7f7f7;
  font: 700 34px/42px Inter, Roboto, sans-serif;
  text-align: center;
}
.battery-tip { width: 4px; height: 13px; border-radius: 0 6px 6px 0; background: #adadad; }

.titlebar {
  height: 138px;
  padding: 4px 51px 0;
  display: grid;
  grid-template-columns: 63px 1fr 63px;
  align-items: center;
}
.company {
  grid-column: 2;
  display: flex;
  justify-content: center;
  align-items: center;
  gap: 20px;
  font-size: 53px;
  font-weight: 700;
  line-height: 60px;
}

/* Section tabs */
.tabs {
  height: 179px;
  padding: 30px 0 0 75px;
  display: flex;
  gap: 108px;
  background: #fff;
  border-bottom: 1px solid #e5e5e5;
  overflow: hidden;
}
.tab {
  flex: none;
  height: 147px;
  padding: 44px 14px 0;
  font-size: 47px;
  line-height: 60px;
  white-space: nowrap;
}
.tab-active {
  padding: 44px 0 0;
  border-bottom: 9px solid #ffc20e;
  font-weight: 700;
}

/* Cards */
.content {
  flex: 1;
  display: flex;
  flex-direction: column;
  gap: 60px;
  padding: 102px 30px 0;
}
.card {
  background: #fff;
  border-radius: 24px;
  box-shadow: 0 0 30px rgba(0, 0, 0, .05);
}
.card-head {
  height: 165px;
  padding-right: 74px;
  display: flex;
  align-items: center;
  border-bottom: 3px solid #e5e5e5;
}
.card-head::before { content: ""; width: 6px; height: 48px; background: #ffc20e; }
.card-head h2 {
  flex: 1;
  margin: 0 0 0 66px;
  color: #333;
  font-size: 53px;
  font-weight: 500;
  line-height: 60px;
}
.see-all { font-size: 38px; line-height: 48px; }

.card-body { min-height: 567px; padding: 48px; }
.summary {
  height: 216px;
  padding: 0 72px;
  display: flex;
  align-items: center;
  border: 3px solid #cacaca;
  border-radius: 24px;
}
.disc {
  width: 144px;
  height: 144px;
  display: grid;
  place-items: center;
  border-radius: 50%;
  background: #f7f7f7;
}
.count { margin-left: 50px; padding-bottom: 6px; font-size: 118px; font-weight: 500; line-height: 144px; }
.state { margin-left: 26px; font-size: 47px; line-height: 60px; }
.go { margin-left: auto; }

/* Map */
.fleet { flex: 1; display: flex; flex-direction: column; border-radius: 24px 24px 0 0; }
.map { position: relative; flex: 1 0 833px; }
.map-art { position: absolute; inset: 0; width: 100%; height: 100%; }

.satellite {
  position: absolute;
  top: 195px;
  right: 48px;
  height: 93px;
  padding: 0 18px;
  display: flex;
  align-items: center;
  gap: 22px;
  border-radius: 12px;
  background: #fff;
  box-shadow: 0 3px 9px rgba(0, 0, 0, .3);
  color: #333;
  font-size: 38px;
}
.satellite input {
  appearance: none;
  width: 60px;
  height: 57px;
  margin: 0;
  border: 3px solid #999;
  border-radius: 6px;
  background: #fff;
}
.unlock {
  position: absolute;
  right: 18px;
  bottom: 48px;
  width: 144px;
  height: 144px;
  display: grid;
  place-items: center;
  border-radius: 50%;
  background: #ffc20e;
}

.w { fill: #67d0e7; }
.g { fill: #cbd0cb; }
.e { fill: #bdc2bd; }
.l { fill: #bbecd8; }
.m { fill: #a7e6cc; }
.d { fill: #8fe0bf; }
.e2 { fill: #87d6b5; }
.c { fill: #f4f0e4; }
.s { fill: #fbf8f3; }
.i { fill: #fff; }
.h { fill: #e6e8e6; }
.b, .bs, .bt { fill: none; stroke: #6c7476; stroke-width: 5px; stroke-dasharray: 16px 12px; }
.bs { stroke: #444; stroke-width: 6px; stroke-dasharray: none; }
.bt { stroke-width: 4px; stroke-dasharray: 4px 10px; }

.place, .sea, .country { text-anchor: middle; }
.place { fill: #555b5e; font-size: 28px; font-weight: 500; }
.place, .country { stroke: #f3fbf7; stroke-width: 7px; stroke-linejoin: round; paint-order: stroke; }
.country { fill: #1d1f21; font-size: 36px; font-weight: 700; }
.sea { fill: #147e98; font-size: 30px; }

/* Bottom bar */
.dock {
  position: sticky;
  bottom: 0;
  padding-bottom: 24px;
  background: #000;
  color: #fff;
}
.dock-nav { height: 210px; padding: 22px 2px 0 0; display: grid; grid-template-columns: repeat(5, 1fr); }
.dock-item {
  display: flex;
  flex-direction: column;
  align-items: center;
  gap: 12px;
  font-size: 37px;
  font-weight: 500;
  line-height: 46px;
}
.dock-active { color: #ffa800; }
.dock-active svg { fill: #ffc20e; }
.home-bar { width: 36%; height: 15px; margin: 0 auto; border-radius: 8px; background: #fff; }
```
